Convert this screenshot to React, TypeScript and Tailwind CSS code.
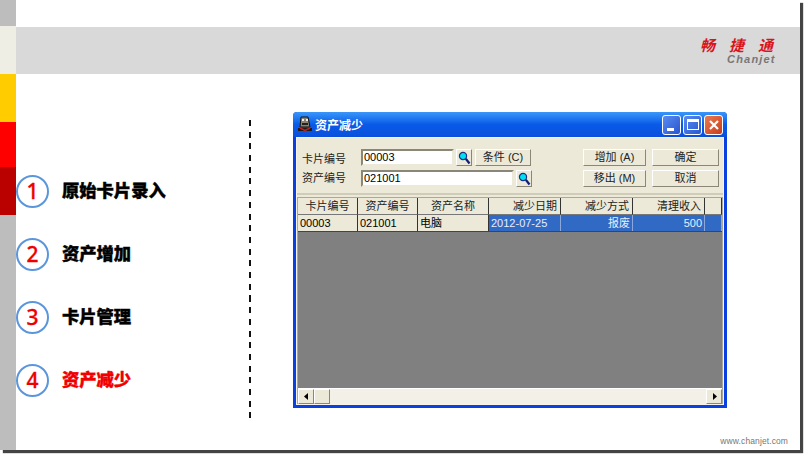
import React from "react";

const cjk = "font-['Liberation_Sans','Noto_Sans_CJK_SC',sans-serif]";
const raised = "border border-t-white border-l-white border-r-[#8a8778] border-b-[#8a8778] bg-[#ece9d8]";
const sunken = "border-2 border-t-[#8a8778] border-l-[#8a8778] border-r-[#ece9d8] border-b-[#ece9d8] bg-white";

function Lens() {
  return (
    <svg width="13" height="14" viewBox="0 0 13 14">
      <circle cx="5" cy="5" r="3.6" fill="#00e0f0" stroke="#203080" strokeWidth="1.2" />
      <path d="M7.8 7.8 L11.5 12.5" stroke="#10207a" strokeWidth="2.2" />
    </svg>
  );
}

function SearchBtn({ className }: { className: string }) {
  return <div className={`${raised} flex items-center justify-center w-[16px] h-[17px] ${className}`}><Lens /></div>;
}

function Btn({ label, w }: { label: string; w: string }) {
  return (
    <div className={`${raised} ${w} h-[17px] flex items-center justify-center text-[11px] leading-none text-[#222]`}>{label}</div>
  );
}

const steps = [
  { n: "1", t: "原始卡片录入", c: "text-black" },
  { n: "2", t: "资产增加", c: "text-black" },
  { n: "3", t: "卡片管理", c: "text-black" },
  { n: "4", t: "资产减少", c: "text-[#f00000]" },
];

const cols = [
  { t: "卡片编号", v: "00003", w: "w-[60px]", a: "text-left", hl: false },
  { t: "资产编号", v: "021001", w: "w-[60px]", a: "text-left", hl: false },
  { t: "资产名称", v: "电脑", w: "w-[71px]", a: "text-left", hl: false },
  { t: "减少日期", v: "2012-07-25", w: "w-[72px]", a: "text-left", hl: true },
  { t: "减少方式", v: "报废", w: "w-[72px]", a: "text-right", hl: true },
  { t: "清理收入", v: "500", w: "w-[72px]", a: "text-right", hl: true },
  { t: "", v: "", w: "flex-1", a: "text-right", hl: true },
];

function Dialog() {
  return (
    <div className={`w-[434px] h-[296px] mt-[38px] ml-[42px] flex flex-col rounded-t-[4px] bg-[#0a3fe0] p-[3px] pt-0 ${cjk}`}>
      <div className="h-[25px] shrink-0 -mx-[3px] px-[4px] rounded-t-[4px] flex items-center bg-gradient-to-b from-[#3a96f8] via-[#0a5ae8] to-[#0a4fdc]">
        <svg width="16" height="17" viewBox="0 0 16 17" className="shrink-0">
          <path d="M4 1 H11 L13 11 H3 Z" fill="#8a8270" stroke="#111" />
          <rect x="5" y="3" width="2" height="2" fill="#eee" />
          <rect x="9" y="3" width="2" height="2" fill="#eee" />
          <rect x="5" y="7" width="6" height="2" fill="#222" />
          <path d="M1 12 H15 V15 H1 Z" fill="#1a1a1a" />
          <path d="M3 12 L8 14.5 L13 12" stroke="#c02020" strokeWidth="1.5" fill="none" />
        </svg>
        <span className="ml-[2px] mt-[2px] text-[12px] font-bold text-white leading-none">资产减少</span>
        <div className="ml-auto flex gap-[2px]">
          <div className="w-[19px] h-[20px] rounded-[3px] border border-white bg-gradient-to-br from-[#5a8cf0] to-[#2a55d0] flex items-end pl-[4px] pb-[3px]">
            <div className="w-[7px] h-[3px] bg-white" />
          </div>
          <div className="w-[19px] h-[20px] rounded-[3px] border border-white bg-gradient-to-br from-[#5a8cf0] to-[#2a55d0] flex items-center justify-center">
            <div className="w-[12px] h-[11px] border border-t-[3px] border-white" />
          </div>
          <div className="w-[19px] h-[20px] rounded-[3px] border border-white bg-gradient-to-br from-[#ea7a50] to-[#c83a18] flex items-center justify-center">
            <svg width="12" height="12" viewBox="0 0 12 12"><path d="M2 2 L10 10 M10 2 L2 10" stroke="#fff" strokeWidth="2.2" /></svg>
          </div>
        </div>
      </div>

      <div className="flex-1 flex flex-col min-h-0 bg-[#ece9d8] border border-[#f6f4ea]">
        <div className="h-[57px] shrink-0 flex flex-col gap-[4px] pt-[11px] border-b-2 border-b-[#cfccba]">
          <div className="flex items-center h-[17px]">
            <span className="w-[64px] pl-[5px] mt-[4px] text-[11px] leading-none text-[#222]">卡片编号</span>
            <div className={`${sunken} w-[93px] h-[17px] flex items-center px-[1px] text-[11px] leading-none text-black`}>00003</div>
            <SearchBtn className="ml-[2px]" />
            <div className="ml-[3px]"><Btn label="条件 (C)" w="w-[56px]" /></div>
            <div className="ml-[52px]"><Btn label="增加 (A)" w="w-[63px]" /></div>
            <div className="ml-[6px]"><Btn label="确定" w="w-[67px]" /></div>
          </div>
          <div className="flex items-center h-[17px]">
            <span className="w-[64px] pl-[5px] -mt-[1px] text-[11px] leading-none text-[#222]">资产编号</span>
            <div className={`${sunken} w-[153px] h-[17px] flex items-center px-[1px] text-[11px] leading-none text-black`}>021001</div>
            <SearchBtn className="ml-[2px]" />
            <div className="ml-[51px]"><Btn label="移出 (M)" w="w-[63px]" /></div>
            <div className="ml-[6px]"><Btn label="取消" w="w-[67px]" /></div>
          </div>
        </div>
        <div className="mt-[2px] flex-1 flex flex-col min-h-0 border border-[#aca899] border-b-0">
          <div className="flex h-[17px] shrink-0">
            {cols.map((c, i) => (
              <div key={i} className={`${c.w} border-r border-r-[#333] border-b border-b-[#777] bg-[#ece9d8] flex items-center ${i >= 3 && i < 6 ? "justify-end pr-[3px]" : "justify-center"} text-[11px] leading-none text-[#222]`}>
                {c.t}
              </div>
            ))}
          </div>
          <div className="flex h-[17px] shrink-0 border-b border-b-[#444]">
            {cols.map((c, i) => (
              <div key={i} className={`${c.w} px-[2px] border-r flex items-center text-[11px] leading-none ${c.a === "text-right" ? "justify-end" : "justify-start"} ${c.hl ? "bg-[#316ac5] text-[#e8eefa] border-r-[#8ba8dc]" : "bg-[#ece9d8] text-black border-r-[#333]"}`}>
                {c.v}
              </div>
            ))}
          </div>
          <div className="flex-1 bg-[#808080]" />
          <div className="h-[16px] shrink-0 flex bg-[#f3f1e7] border-t border-t-white">
            <div className={`${raised} w-[16px] flex items-center justify-center`}>
              <svg width="5" height="7" viewBox="0 0 5 7"><path d="M4 0 V7 L0 3.5 Z" fill="#000" /></svg>
            </div>
            <div className={`${raised} w-[16px]`} />
            <div className="flex-1" />
            <div className={`${raised} w-[16px] flex items-center justify-center`}>
              <svg width="5" height="7" viewBox="0 0 5 7"><path d="M1 0 V7 L5 3.5 Z" fill="#000" /></svg>
            </div>
          </div>
        </div>
      </div>
    </div>
  );
}

export default function App() {
  return (
    <div className="w-[804px] h-[454px] bg-white overflow-hidden">
      <div className="w-[800px] h-[450px] flex bg-white shadow-[3px_3px_1px_#444]">
        <div className="w-[16px] shrink-0 flex flex-col">
          <div className="h-[26px] bg-[#bdbdbd]" />
          <div className="h-[48px] bg-[#eeeee4]" />
          <div className="h-[48px] bg-[#ffcc00]" />
          <div className="h-[45px] bg-[#ff0000]" />
          <div className="h-[48px] bg-[#bb0000]" />
          <div className="flex-1 bg-[#bdbdbd]" />
        </div>
        <div className="flex-1 flex flex-col min-w-0">
          <div className="h-[27px] shrink-0" />
          <div className="h-[47px] shrink-0 bg-[#d9d9d9] flex justify-end">
            <div className="w-[84px] mr-[16px] flex flex-col items-start pt-[10px]">
              <div className="text-[15px] h-[15px] leading-[15px] font-bold italic text-[#d8141c] tracking-[14px] whitespace-nowrap font-['Noto_Sans_CJK_SC',sans-serif]">畅捷通</div>
              <div className="ml-[27px] mt-[2px] text-[11px] h-[10px] leading-[10px] font-bold italic text-[#777] tracking-[1.2px] font-['Liberation_Sans',sans-serif]">Chanjet</div>
            </div>
          </div>
          <div className="flex-1 flex min-h-0">
            <div className="w-[233px] shrink-0 flex flex-col gap-[30px] pt-[101px]">
              {steps.map((s) => (
                <div key={s.n} className="flex items-center h-[33px]">
                  <div className="w-[33px] h-[33px] rounded-full border-2 border-[#5b96dc] bg-white flex items-center justify-center text-[21px] leading-none font-medium text-[#ee0000] font-['Noto_Sans',sans-serif] [-webkit-text-stroke:0.3px_#ee0000]">
                    {s.n}
                  </div>
                  <span className={`ml-[13px] -mt-[3px] text-[17.3px] leading-none font-black ${s.c} font-['Noto_Sans_CJK_SC',sans-serif] [-webkit-text-stroke:0.4px]`}>{s.t}</span>
                </div>
              ))}
            </div>
            <div className="w-[2px] h-[298px] mt-[46px] shrink-0 bg-[repeating-linear-gradient(to_bottom,#111_0px,#111_6px,transparent_6px,transparent_11.7px)]" />
            <div className="shrink-0"><Dialog /></div>
            <div className="flex-1 relative">
              <span className="absolute right-[12px] top-[363px] text-[8.5px] tracking-[0.1px] leading-none text-[#777] whitespace-nowrap font-['Liberation_Sans',sans-serif]">www.chanjet.com</span>
            </div>
          </div>
        </div>
      </div>
    </div>
  );
}
